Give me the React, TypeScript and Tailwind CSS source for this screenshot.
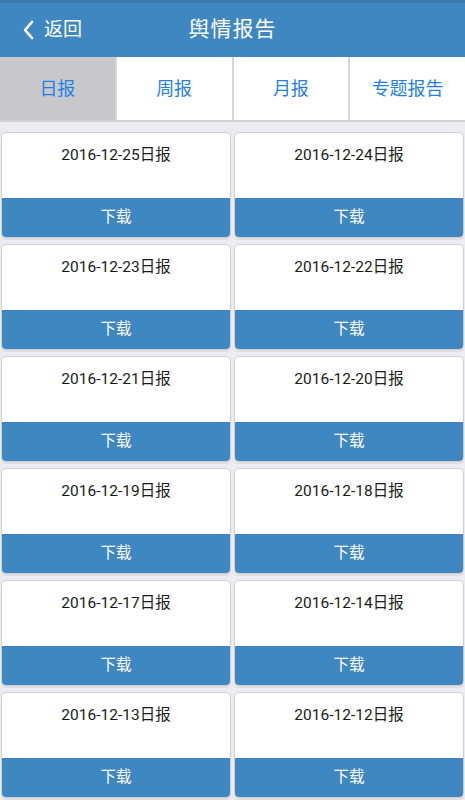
import React from 'react';

const dates = [
  '2016-12-25', '2016-12-24',
  '2016-12-23', '2016-12-22',
  '2016-12-21', '2016-12-20',
  '2016-12-19', '2016-12-18',
  '2016-12-17', '2016-12-14',
  '2016-12-13', '2016-12-12',
];

const tabs = ['日报', '周报', '月报', '专题报告'];

const App: React.FC = () => {
  return (
    <div className="w-[465px] h-[800px] overflow-hidden bg-[#ededf1] font-['Roboto','Noto_Sans_CJK_SC',sans-serif]">
      <div className="relative h-[57px] bg-[#3f87c1] border-t-[3px] border-[#3779ad] flex items-center justify-center">
        <div className="absolute left-[22px] top-0 h-full flex items-center text-white">
          <svg width="12" height="20" viewBox="0 0 12 20" fill="none">
            <path d="M10 2 L3 10 L10 18" stroke="white" strokeWidth="2.6" strokeLinecap="round" strokeLinejoin="round" />
          </svg>
          <span className="ml-[10px] text-[19px]">返回</span>
        </div>
        <span className="text-white text-[21px] tracking-[1px]">舆情报告</span>
      </div>

      <div className="flex h-[65px] bg-white border-b-2 border-[#d2d2d6]">
        {tabs.map((t, i) => (
          <div
            key={t}
            className={`flex-1 flex items-center justify-center text-[18px] text-[#1f80e6] ${i === 0 ? 'bg-[#c8c8cc]' : ''} ${i > 0 ? 'border-l-2 border-[#d6d6da]' : ''}`}
          >
            {t}
          </div>
        ))}
      </div>

      <div className="grid grid-cols-2 gap-x-[3px] gap-y-[6px] px-px pt-[10px]">
        {dates.map((d) => (
          <div
            key={d}
            className="h-[106px] rounded-[5px] overflow-hidden bg-white border border-[#cfcfd3] shadow-[0_2px_1px_rgba(0,0,0,0.06)] flex flex-col"
          >
            <div className="h-[65px] flex justify-center pt-[11px] text-[15.5px] text-[#1a1a1a]">
              {d}日报
            </div>
            <div className="flex-1 bg-[#3f87c1] flex items-center justify-center text-white text-[15.5px]">
              下载
            </div>
          </div>
        ))}
      </div>
    </div>
  );
};

export default App;
